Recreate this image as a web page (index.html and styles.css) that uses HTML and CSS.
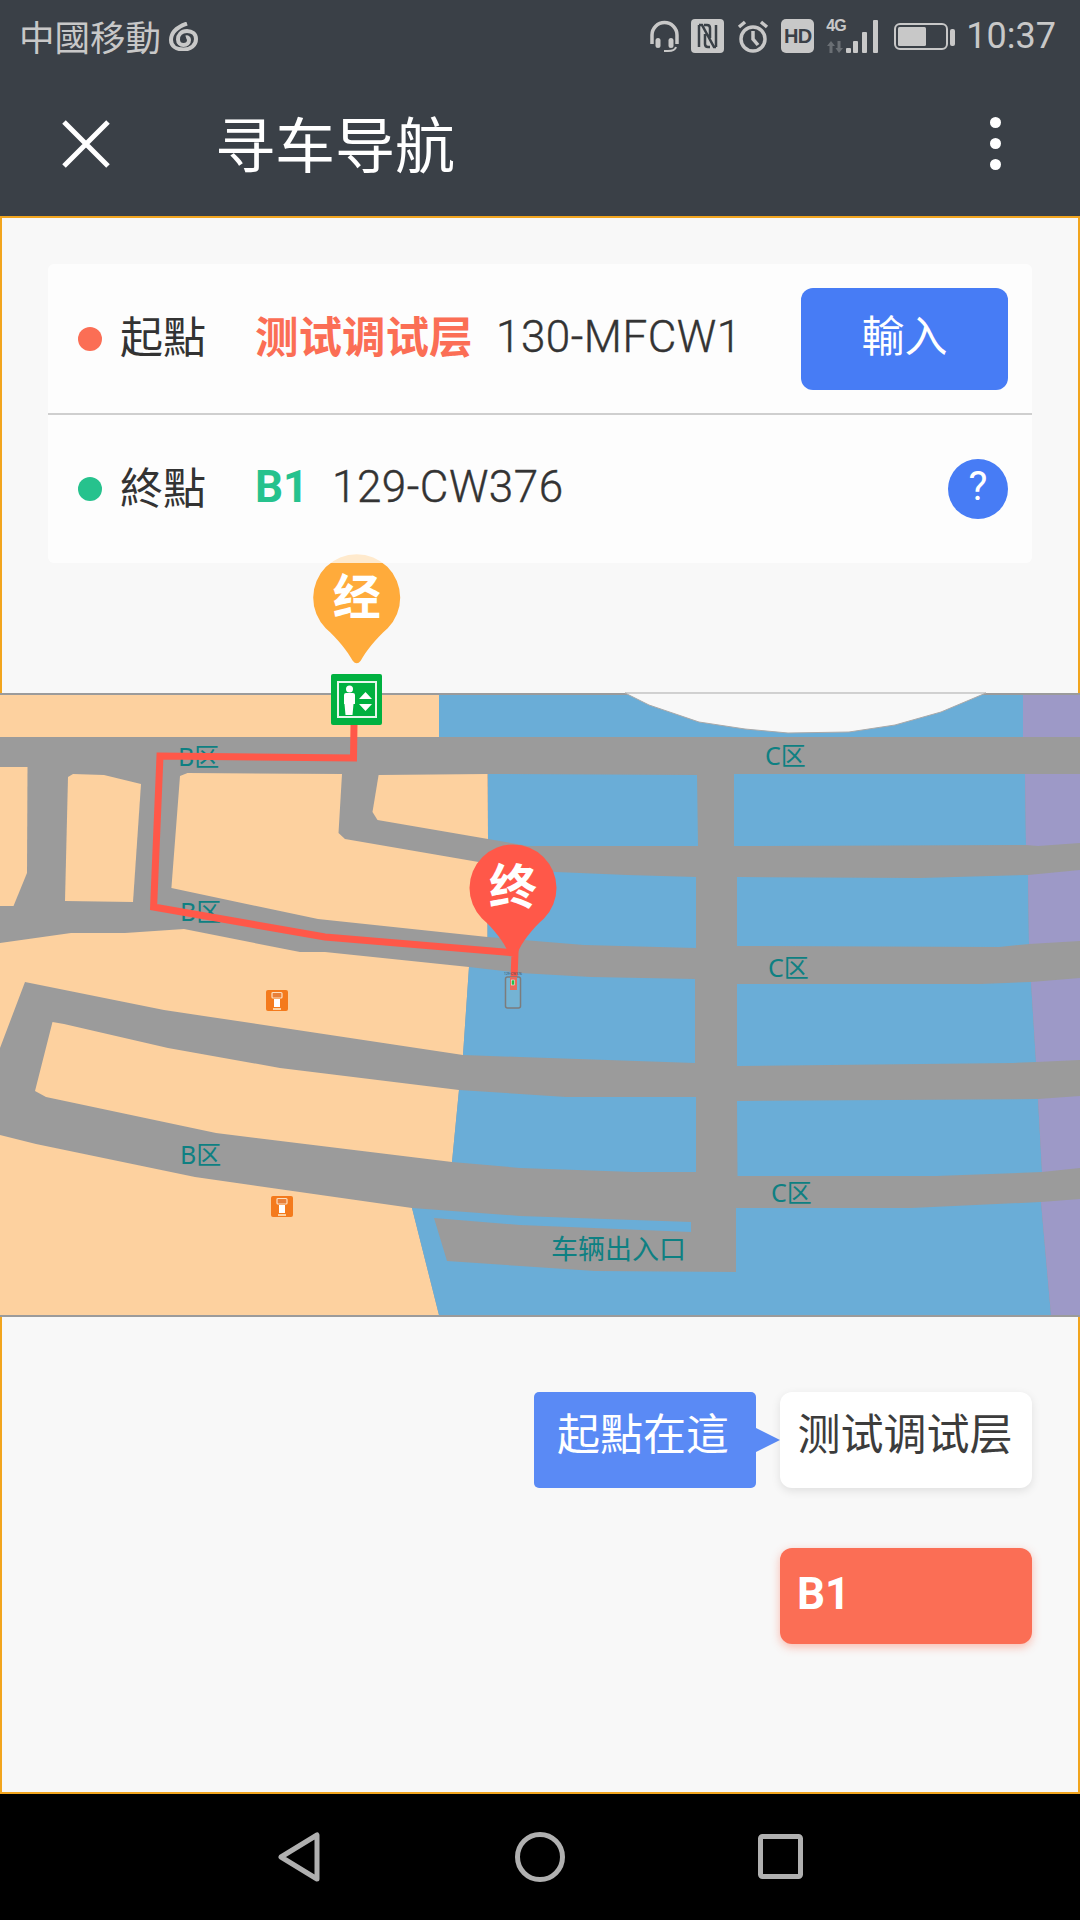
FILE: index.html
```html
<!DOCTYPE html>
<html lang="zh">
<head>
<meta charset="utf-8">
<title>寻车导航</title>
<link rel="stylesheet" href="styles.css">
</head>
<body>
<div class="screen">
  <div class="status">
    <div class="status-left">
      <span class="carrier">中國移動</span>
      <svg class="ic-swirl" viewBox="0 0 29 29"><path d="M18 1.500 C8 5 2 11 2 18 C2 24 7 27.500 14.500 27.500 C22 27.500 27 23 27 17 C27 12 23 9 18 9 C12 9 9 13 9 17.500 C9 21 11.500 23 14.500 23 C18 23 20 21 20 18 C20 16 18.500 15 17 15.500" /></svg>
    </div>
    <div class="status-right">
      <svg class="ic-head" viewBox="0 0 31 33"><path class="st" d="M3 24 V15 a12.5 12.5 0 0 1 25 0 V24"/><rect class="sf" x="6.500" y="18" width="5" height="10" rx="2.500"/><rect class="sf" x="19.500" y="18" width="5" height="10" rx="2.500"/><path class="st-thin" d="M27 27 q-1 4-8 4 h-4"/></svg>
      <svg class="ic-nfc" viewBox="0 0 33 34"><rect class="sf" width="33" height="34" rx="4"/><path class="st-dark" d="M8 6 V28 M25 6 V28 M8 6 h3 L23 28 h2 M13 6 h3 q3 0 3 3 V19 M14 15 V25 q0 3 3 3 h2"/></svg>
      <svg class="ic-alarm" viewBox="0 0 34 33"><circle class="st" cx="17" cy="19" r="12"/><path class="st" d="M17 11 V19 L22 25 M3 7 L9 2 M31 7 L25 2"/></svg>
      <div class="hd">HD</div>
      <div class="signal">
        <span class="four-g">4G</span>
        <svg class="ic-arrows" viewBox="0 0 18 12"><path d="M5 0 L9 5 H6.500 V12 H3.500 V5 H1 Z M13 12 L9.500 7 H11.500 V0 H14.500 V7 H17 Z"/></svg>
        <i class="bar bar-1"></i><i class="bar bar-2"></i><i class="bar bar-3"></i><i class="bar bar-4"></i>
      </div>
      <svg class="ic-batt" viewBox="0 0 61 27"><rect class="batt-o" x="1" y="1" width="52" height="25" rx="5"/><rect class="sf" x="4" y="4" width="28" height="19" rx="1.500"/><rect class="sf" x="56" y="6" width="5" height="17" rx="2"/></svg>
      <span class="time">10:37</span>
    </div>
  </div>
  <header class="topbar">
    <svg class="ic-close" viewBox="0 0 48 48"><path d="M2 2 L46 46 M46 2 L2 46"/></svg>
    <h1 class="title">寻车导航</h1>
    <div class="more"><i></i><i></i><i></i></div>
  </header>

  <main class="frame">
    <section class="card">
      <div class="row row-from">
        <i class="dot dot-red"></i>
        <span class="label">起點</span>
        <span class="place place-red">测试调试层</span>
        <span class="code">130-MFCW1</span>
        <button class="btn">輸入</button>
      </div>
      <div class="row row-to">
        <i class="dot dot-green"></i>
        <span class="label">終點</span>
        <span class="floor">B1</span>
        <span class="code">129-CW376</span>
        <span class="help">?</span>
      </div>
    </section>

    <svg class="map" viewBox="0 694 1080 622">
      <rect class="road" x="0" y="693" width="1080" height="624"/>
      <g class="tan">
        <polygon points="0,695 439,695 439,737 0,737"/>
        <polygon points="0,767 27.500,767 27,873 13.500,906 0,906"/>
        <polygon points="68,777 73,774 104,775 141,784 133,902 65,901"/>
        <polygon points="180,776 187.500,773 342,774 338.500,833 345,839 478.600,862 487.500,864 487.500,937 318,919 171.400,888"/>
        <polygon points="378.600,775 487.500,774 488,839 377.500,820 372.500,812"/>
        <polygon points="0,943 71,933 125,933 184,929 300,952 325,952 469,967 463,1055 164,1010 25,982 0,1048"/>
        <polygon points="52.500,1022 64,1024 168,1048 280,1068 459,1090 452,1162 216,1133 46,1097 35,1091"/>
        <polygon points="0,1135 36,1144 195,1177 412,1208 439,1315 0,1315"/>
      </g>
      <g class="blue">
        <polygon points="439,695 1023,695 1023,737 439,737"/>
        <polygon points="488,774 697,775 698,846 528,846 488,839"/>
        <polygon points="487.500,864 556,872 627,875 696,877 696,948 584,945 487.500,937"/>
        <polygon points="469,967 520,973 591,977 695,979 695,1063 520,1057 463,1055"/>
        <polygon points="459,1090 520,1094 566,1097 696,1097 696,1172 634,1172 520,1168 452,1162"/>
        <polygon points="412,1208 520,1216 691,1222 691,1232 520,1225 434,1218 447,1261 520,1266 595,1271 736,1272 736,1208 911,1208 1041,1202 1051,1315 439,1315"/>
        <polygon points="734,774 1025,774 1026,845 734,846"/>
        <polygon points="737,877 920,878 1028,875 1029,944 999,947 737,946"/>
        <polygon points="737,984 981,984 1031,982 1036,1062 1013,1063 737,1066"/>
        <polygon points="737,1101 1038,1099 1042,1172 936,1176 737.500,1176"/>
      </g>
      <g class="purple">
        <polygon points="1023,695 1080,695 1080,737 1023,737"/>
        <polygon points="1025,774 1080,774 1080,843 1038,846 1026,845"/>
        <polygon points="1028,875 1080,870 1080,941 1029,944"/>
        <polygon points="1031,982 1080,978 1080,1060 1036,1062"/>
        <polygon points="1038,1099 1080,1096 1080,1168 1042,1172"/>
        <polygon points="1041,1202 1080,1199 1080,1315 1051,1315"/>
      </g>
      <path class="bay" d="M625,693 L649,705 L699,722 L745,729 L788,733 L849,732 L895,725 L941,712 L986,693 Z"/>

      <text class="map-label" x="178" y="766">B区</text>
      <text class="map-label" x="180" y="921">B区</text>
      <text class="map-label" x="180" y="1164">B区</text>
      <text class="map-label" x="765" y="765">C区</text>
      <text class="map-label" x="768" y="977">C区</text>
      <text class="map-label" x="771" y="1202">C区</text>
      <text class="map-label map-label-exit" x="551" y="1259">车辆出入口</text>

      <g class="kiosk" transform="translate(266 990)">
        <rect class="kiosk-bg" width="22" height="21" rx="2"/>
        <rect class="kiosk-screen" x="6" y="2.500" width="10" height="5.500" rx="1"/>
        <rect class="kiosk-stem" x="8" y="9" width="6" height="8"/>
        <rect class="kiosk-base" x="7" y="18" width="8" height="2"/>
      </g>
      <g class="kiosk" transform="translate(271 1196)">
        <rect class="kiosk-bg" width="22" height="21" rx="2"/>
        <rect class="kiosk-screen" x="6" y="2.500" width="10" height="5.500" rx="1"/>
        <rect class="kiosk-stem" x="8" y="9" width="6" height="8"/>
        <rect class="kiosk-base" x="7" y="18" width="8" height="2"/>
      </g>

      <polyline class="route" points="354,725 353.500,758 160,756 153.600,907 325,937 515,953 514,978"/>

      <rect class="car" x="505.500" y="977" width="15" height="31" rx="2"/>
      <rect class="route-end" x="510" y="977" width="7" height="13"/>
      <rect class="car-mark" x="511.500" y="980" width="3" height="5"/>
      <text class="car-code" x="513" y="975">129-CW376</text>

      <g class="elevator">
        <rect class="elev-bg" x="331" y="674" width="51" height="51" rx="2"/>
        <rect class="elev-frame" x="338" y="682" width="38" height="35"/>
        <circle class="elev-white" cx="349.500" cy="689" r="3.500"/>
        <path class="elev-white" d="M344 695 q0-2 2-2 h7 q2 0 2 2 v9 h-1.500 l-1 11 h-7 l-1-11 H344 Z"/>
        <path class="elev-white" d="M365.500 692 L372 699 H359 Z M365.500 711 L359 704 H372 Z"/>
      </g>

      <g transform="translate(356.700 597.700)">
        <path class="pin-way" d="M-31 30.500 A43.500 43.500 0 1 1 31 30.500 C19 41 9 54 4 63 Q0 68 -4 63 C-9 54 -19 41 -31 30.500 Z"/>
        <text class="pin-text" x="0" y="16">经</text>
      </g>
      <g transform="translate(513 888)">
        <path class="pin-end" d="M-31 30.500 A43.500 43.500 0 1 1 31 30.500 C19 41 9 54 4 66 L-4 66 C-9 54 -19 41 -31 30.500 Z"/>
        <text class="pin-text" x="0" y="16">终</text>
      </g>
    </svg>

    <div class="tags">
      <div class="tag-row">
        <div class="tag tag-blue">起點在這</div>
        <div class="tag tag-white">测试调试层</div>
      </div>
      <div class="tag-row">
        <div class="tag tag-red">B1</div>
      </div>
    </div>
  </main>

  <nav class="navbar">
    <svg class="nav-back" viewBox="0 0 43 50"><path d="M39 3 V47 L3 25 Z"/></svg>
    <svg class="nav-home" viewBox="0 0 50 50"><circle cx="25" cy="25" r="22.500"/></svg>
    <svg class="nav-recent" viewBox="0 0 45 45"><rect x="2.500" y="2.500" width="40" height="40" rx="2"/></svg>
  </nav>
</div>
</body>
</html>
```
FILE: styles.css
```css
* { box-sizing: border-box; }
html, body { margin: 0; padding: 0; }
body { font-family: Roboto, "Noto Sans CJK TC", sans-serif; background: #000; }

.screen { width: 1080px; height: 1920px; display: flex; flex-direction: column; overflow: hidden; }

/* status bar */
.status { height: 72px; background: #3a4047; display: flex; justify-content: space-between; align-items: center; padding: 0 24px 0 19px; color: #c8c8c8; }
.status-left { display: flex; align-items: center; gap: 8px; }
.carrier { font: 400 35.500px/1 "Noto Sans CJK TC", sans-serif; }
.ic-swirl { width: 29px; height: 29px; fill: none; stroke: #c8c8c8; stroke-width: 4; }
.status-right { display: flex; align-items: center; }
.ic-head { width: 31px; height: 33px; margin-right: 11px; }
.st { fill: none; stroke: #c8c8c8; stroke-width: 3.500; }
.st-thin { fill: none; stroke: #c8c8c8; stroke-width: 2; }
.sf { fill: #c8c8c8; }
.st-dark { fill: none; stroke: #3a4047; stroke-width: 2.500; }
.ic-nfc { width: 33px; height: 34px; margin-right: 12px; }
.ic-alarm { width: 34px; height: 33px; margin-right: 11px; }
.hd { width: 33px; height: 34px; margin-right: 12px; background: #c8c8c8; border-radius: 5px; color: #3a4047; font: 700 20px/34px "Liberation Sans", sans-serif; text-align: center; letter-spacing: -0.500px; }
.signal { position: relative; width: 52px; height: 34px; margin-right: 16px; }
.four-g { position: absolute; left: 0; top: -1px; font: 700 16px/16px "Liberation Sans", sans-serif; letter-spacing: -1px; color: #c8c8c8; }
.ic-arrows { position: absolute; left: 0; bottom: 0; width: 18px; height: 12px; fill: #6a6f74; }
.bar { position: absolute; bottom: 0; width: 5px; background: #c8c8c8; border-radius: 1px; }
.bar-1 { left: 20px; height: 5px; }
.bar-2 { left: 27px; height: 12px; }
.bar-3 { left: 36px; height: 21px; }
.bar-4 { left: 47px; height: 33px; }
.ic-batt { width: 61px; height: 27px; margin-right: 11px; }
.batt-o { fill: none; stroke: #c8c8c8; stroke-width: 2; }
.time { font: 400 36px/1 Roboto, sans-serif; color: #c8c8c8; }

/* top bar */
.topbar { height: 144px; background: #3a4047; display: flex; align-items: center; padding: 0 79px 0 62px; color: #fff; }
.ic-close { width: 48px; height: 48px; fill: none; stroke: #fff; stroke-width: 5; }
.title { margin: -4px 0 0 105px; flex: 1; font: 400 60px/1 "Noto Sans CJK SC", sans-serif; }
.more { display: flex; flex-direction: column; gap: 10px; margin-top: -2px; }
.more i { display: block; width: 11px; height: 11px; border-radius: 50%; background: #fff; }

/* frame */
.frame { height: 1578px; background: #f8f8f8; border: 2px solid #f2a51e; }
.card { position: relative; z-index: 1; width: 984px; height: 299px; margin: 46px 0 0 46px; background: rgba(255, 255, 255, .75); border-radius: 6px; }
.row { display: flex; align-items: center; height: 151px; padding: 0 24px 0 30px; color: #333; }
.row-from { border-bottom: 2px solid #cfcfcf; }
.row-to { height: 148px; }
.dot { width: 24px; height: 24px; border-radius: 50%; flex: none; }
.dot-red { background: #fb6e55; }
.dot-green { background: #26c28d; }
.label { width: 135px; margin-left: 18px; font: 400 43px/1 "Noto Sans CJK TC", sans-serif; padding-bottom: 8px; }
.place { width: 219px; font: 700 43.500px/1 "Noto Sans CJK SC", sans-serif; margin-right: 22px; padding-bottom: 8px; white-space: nowrap; }
.place-red { color: #fb6e55; }
.floor { width: 53px; font: 700 44px/1 Roboto, sans-serif; color: #26c28d; margin-right: 24px; padding-bottom: 4px; }
.code { font: 300 44px/1 Roboto, sans-serif; letter-spacing: .500px; padding-bottom: 4px; flex: 1; -webkit-text-stroke: .4px #333; }
.btn { width: 207px; height: 102px; padding: 0 0 10px; border: 0; border-radius: 12px; background: #477cf5; color: #fff; font: 400 43px/1 "Noto Sans CJK TC", sans-serif; }
.help { width: 60px; height: 60px; border-radius: 50%; background: #477cf5; color: #fff; font: 400 40px/56px Roboto, sans-serif; text-align: center; }

/* map */
.map { display: block; width: 1080px; height: 622px; margin: 131px 0 0 -2px; overflow: visible; }
.road { fill: #9b9b9b; }
.tan { fill: #fdd19f; }
.blue { fill: #6aadd7; }
.purple { fill: #9d99c7; }
.bay { fill: #f8f8f8; stroke: #a9a9a9; stroke-width: 1; }
.map-label { font: 400 25px "Noto Sans", "Noto Sans CJK SC", sans-serif; fill: #0e8082; }
.map-label-exit { font-size: 27px; font-family: "Noto Sans CJK SC", sans-serif; }
.route { fill: none; stroke: #ff5849; stroke-width: 7; }
.route-end { fill: #ea6a5c; }
.car { fill: #74b3d4; stroke: #7c7c7c; stroke-width: 1.500; }
.car-mark { fill: #1fc24a; stroke: #fff; stroke-width: .500; }
.car-code { font: 400 3.500px Roboto, sans-serif; fill: #44505c; text-anchor: middle; }
.kiosk-bg { fill: #f47a1c; }
.kiosk-screen { fill: #e8803a; stroke: #fde0c0; stroke-width: 1.200; }
.kiosk-stem { fill: #fff; }
.kiosk-base { fill: #fdd19f; }
.elev-bg { fill: #00b140; }
.elev-frame { fill: none; stroke: #e6f7ec; stroke-width: 2; }
.elev-white { fill: #fff; }
.pin-way { fill: #ffab3b; }
.pin-end { fill: #ff5849; }
.pin-text { font: 700 48px "Noto Sans CJK SC", sans-serif; fill: #fff; text-anchor: middle; }

/* tags */
.tags { display: flex; flex-direction: column; gap: 60px; margin-top: 76px; padding-right: 46px; }
.tag-row { display: flex; justify-content: flex-end; gap: 24px; }
.tag { position: relative; height: 96px; font: 400 43px/78px "Noto Sans CJK TC", sans-serif; }
.tag-blue { width: 222px; padding-right: 4px; border-radius: 5px; background: #5a8af5; color: #fff; text-align: center; }
.tag-blue::after { content: ""; position: absolute; left: 100%; top: 36px; border-style: solid; border-width: 12px 0 12px 24px; border-color: transparent transparent transparent #5a8af5; }
.tag-white { width: 252px; padding-right: 2px; border-radius: 12px; background: #fff; color: #3c3c3c; text-align: center; font-family: "Noto Sans CJK SC", sans-serif; box-shadow: 0 3px 10px rgba(0, 0, 0, .1); }
.tag-red { width: 252px; padding-left: 17px; border-radius: 12px; background: #fb6e55; color: #fff; font: 700 44px/92px Roboto, sans-serif; box-shadow: 0 3px 10px rgba(251, 110, 85, .45); }

/* nav bar */
.navbar { flex: 1; background: #000; position: relative; }
.navbar svg { position: absolute; fill: none; stroke: #b0b0b0; stroke-width: 5; stroke-linejoin: round; }
.nav-back { left: 278px; top: 38px; width: 43px; height: 50px; }
.nav-home { left: 515px; top: 38px; width: 50px; height: 50px; }
.nav-recent { left: 757.500px; top: 40px; width: 45px; height: 45px; }
```
